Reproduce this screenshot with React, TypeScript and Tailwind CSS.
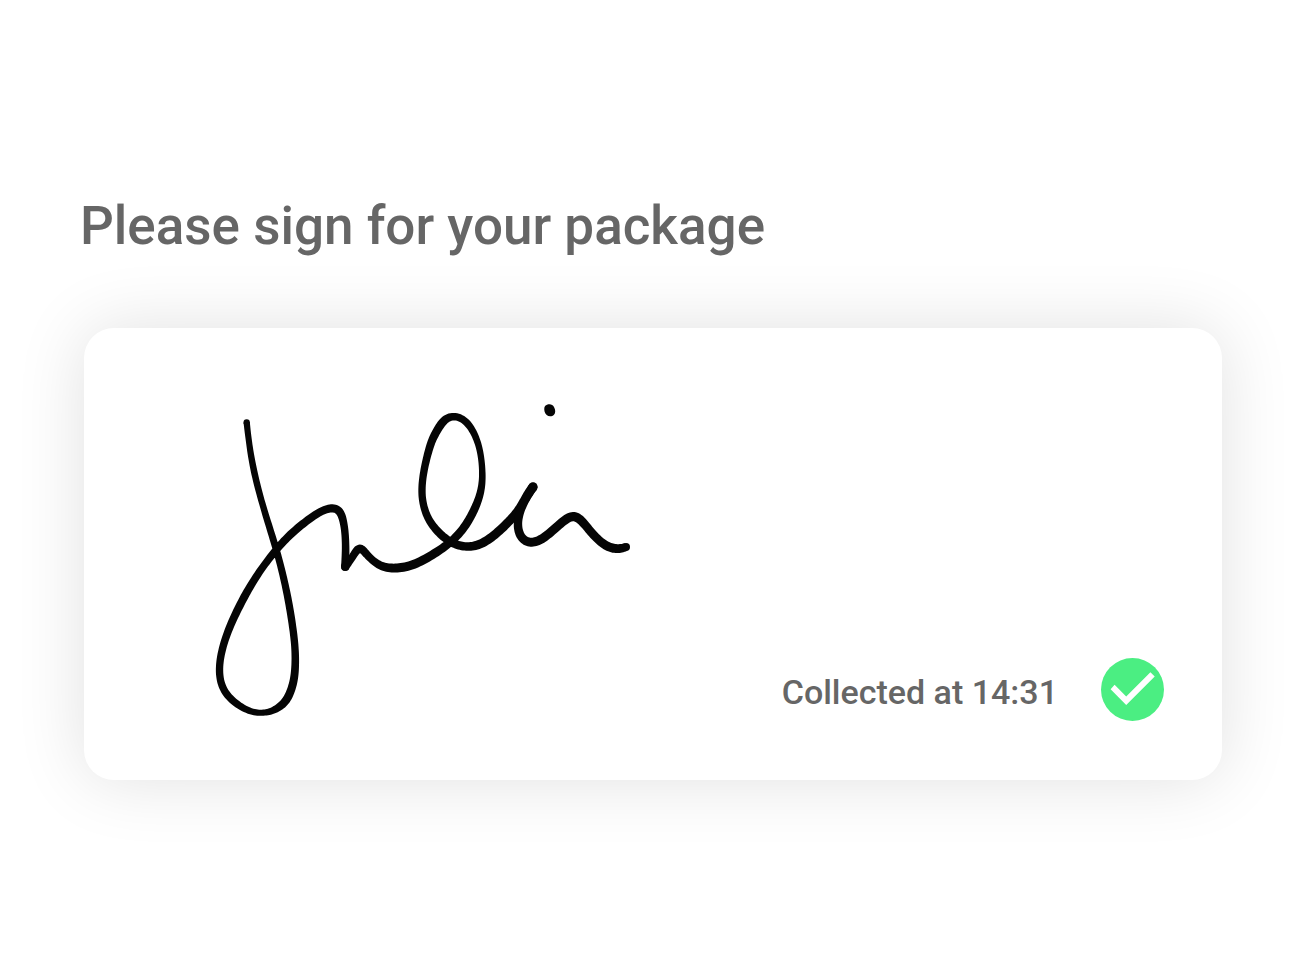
type Point = [x: number, y: number, width: number];

const STROKES: Point[][] = [
  [
    [140, 97, 19], [148, 165, 18], [160, 235, 20], [178, 310, 19], [203, 395, 20],
    [228, 475, 21], [249, 555, 21], [266, 635, 22], [278, 710, 22], [285, 770, 22],
    [286, 825, 23], [281, 876, 24], [264, 924, 25], [241, 949, 24], [214, 964, 20],
    [182, 969, 18], [143, 962, 20], [94, 930, 22], [67, 892, 22], [58, 850, 22],
    [62, 795, 22], [84, 722, 23], [115, 655, 24], [144, 600, 24], [183, 538, 22],
    [228, 480, 23], [266, 438, 24], [308, 402, 24], [352, 370, 24], [386, 355, 24],
    [415, 358, 25], [429, 388, 23], [436, 435, 22], [437, 490, 23], [435, 530, 24],
  ],
  [
    [436, 531, 24], [453, 508, 22], [467, 485, 24], [480, 474, 25], [493, 485, 24],
    [517, 511, 23], [547, 530, 25], [585, 535, 27], [635, 527, 27], [690, 499, 27],
    [740, 466, 25], [775, 434, 25], [800, 401, 25], [819, 367, 25], [837, 325, 23],
    [846, 283, 21], [847, 240, 19], [841, 185, 19], [826, 137, 20], [800, 95, 22],
    [765, 78, 22], [734, 88, 25], [713, 119, 25], [696, 150, 24], [683, 193, 23],
    [671, 245, 22], [665, 300, 22], [670, 345, 22], [685, 388, 23], [714, 426, 24],
    [745, 452, 25], [777, 467, 25], [812, 470, 26], [848, 460, 27], [890, 430, 27],
    [923, 398, 27], [947, 372, 26], [967, 342, 26], [983, 313, 27], [999, 290, 27],
  ],
  [
    [999, 292, 27], [979, 323, 25], [962, 360, 24], [953, 397, 25], [957, 428, 26],
    [971, 450, 26], [995, 458, 27], [1025, 448, 27], [1060, 420, 27], [1094, 390, 27],
    [1119, 378, 28], [1142, 389, 27], [1166, 418, 26], [1195, 450, 26], [1225, 471, 27],
    [1255, 477, 27], [1278, 471, 24],
  ],
];

const STEPS = 8;

const spline = (a: number, b: number, c: number, d: number, t: number) =>
  0.5 * (2 * b + (c - a) * t + (2 * a - 5 * b + 4 * c - d) * t * t + (3 * b - a - 3 * c + d) * t * t * t);

/** Averages each sample with its neighbours; the ends stay in place. */
function smooth(line: Point[]): Point[] {
  return line.map((_, i) => {
    const reach = Math.min(5, i, line.length - 1 - i);
    const near = line.slice(i - reach, i + reach + 1);
    const mean = (k: 0 | 1 | 2) => near.reduce((sum, p) => sum + p[k], 0) / near.length;
    return [mean(0), mean(1), mean(2)];
  });
}

/** Turns a pen line with varying pressure into a closed outline. */
function outline(points: Point[]): string {
  const samples: Point[] = [];
  for (let i = 0; i < points.length - 1; i++) {
    const a = points[Math.max(i - 1, 0)];
    const b = points[i];
    const c = points[i + 1];
    const d = points[Math.min(i + 2, points.length - 1)];
    for (let s = 0; s < STEPS; s++) {
      const at = (k: 0 | 1 | 2) => spline(a[k], b[k], c[k], d[k], s / STEPS);
      samples.push([at(0), at(1), at(2)]);
    }
  }
  samples.push(points[points.length - 1]);
  const line = smooth(samples);

  const left: string[] = [];
  const right: string[] = [];
  line.forEach(([x, y, w], i) => {
    const p = line[Math.max(i - 1, 0)];
    const n = line[Math.min(i + 1, line.length - 1)];
    const length = Math.hypot(n[0] - p[0], n[1] - p[1]) || 1;
    const dx = (((n[1] - p[1]) / length) * w) / 2;
    const dy = (((p[0] - n[0]) / length) * w) / 2;
    left.push(`${(x + dx).toFixed(1)} ${(y + dy).toFixed(1)}`);
    right.unshift(`${(x - dx).toFixed(1)} ${(y - dy).toFixed(1)}`);
  });
  return `M${[...left, ...right].join("L")}Z`;
}

function Signature() {
  return (
    <svg viewBox="0 0 1320 1020" role="img" aria-label="Signature" className="h-[340px] w-[440px] shrink-0 fill-[#050505]">
      {STROKES.map((points, i) => {
        const first = points[0];
        const last = points[points.length - 1];
        return (
          <g key={i}>
            <path d={outline(points)} />
            <circle cx={first[0]} cy={first[1]} r={first[2] / 2} />
            <circle cx={last[0]} cy={last[1]} r={last[2] / 2} />
          </g>
        );
      })}
      <path d="M1041 44C1050 41 1058 43 1062 51C1067 60 1067 69 1062 74C1056 80 1046 80 1040 75C1034 70 1032 61 1033 53C1034 48 1037 45 1041 44Z" />
    </svg>
  );
}

function CheckBadge() {
  return (
    <svg viewBox="0 0 190 190" aria-hidden="true" className="size-[63px] shrink-0">
      <circle cx="95" cy="95" r="95" fill="#4bee82" />
      <path d="M29 94L41 81L76 116L149 43L162 56L76 142Z" fill="#fff" />
    </svg>
  );
}

export default function App() {
  return (
    <main className="min-h-screen bg-white pt-[194px] pr-[78px] pb-16 pl-[84px] font-['Roboto','Liberation_Sans',sans-serif] font-medium text-[#666]">
      <h1 className="-ml-1 text-[53px] leading-[64px]">Please sign for your package</h1>
      <section className="mt-[70px] flex items-end justify-between rounded-[30px] bg-white pt-[62px] pr-[58px] pl-[116px] shadow-[0_0_70px_rgba(0,0,0,0.12)]">
        <div className="pb-[50px]">
          <Signature />
        </div>
        <div className="flex items-center gap-[43px] pb-[59px]">
          <p className="pt-1 text-[34px] leading-10 whitespace-nowrap">Collected at 14:31</p>
          <CheckBadge />
        </div>
      </section>
    </main>
  );
}
